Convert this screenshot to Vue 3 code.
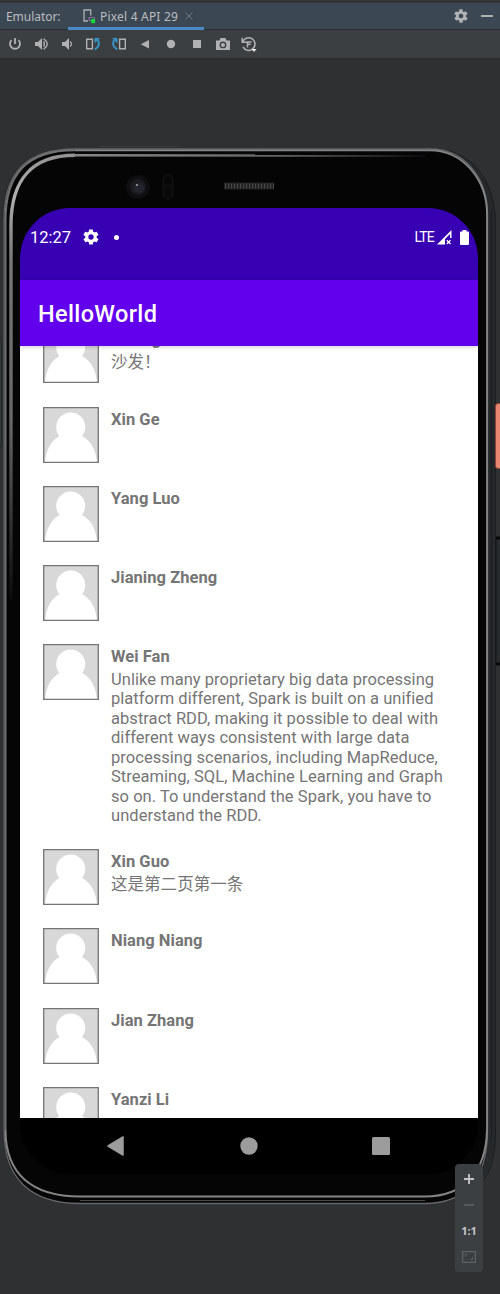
<script setup>
const people = [
  { name: 'Li Jing', lines: ['沙发！'] },
  { name: 'Xin Ge', lines: [] },
  { name: 'Yang Luo', lines: [] },
  { name: 'Jianing Zheng', lines: [] },
  {
    name: 'Wei Fan',
    lines: [
      'Unlike many proprietary big data processing',
      'platform different, Spark is built on a unified',
      'abstract RDD, making it possible to deal with',
      'different ways consistent with large data',
      'processing scenarios, including MapReduce,',
      'Streaming, SQL, Machine Learning and Graph',
      'so on. To understand the Spark, you have to',
      'understand the RDD.',
    ],
  },
  { name: 'Xin Guo', lines: ['这是第二页第一条'] },
  { name: 'Niang Niang', lines: [] },
  { name: 'Jian Zhang', lines: [] },
  { name: 'Yanzi Li', lines: [] },
]
const gear =
  'M19.4 13a7.5 7.5 0 0 0 0-2l2.1-1.6a.5.5 0 0 0 .1-.6l-2-3.5a.5.5 0 0 0-.6-.2l-2.5 1a7.3 7.3 0 0 0-1.7-1l-.4-2.65a.5.5 0 0 0-.5-.45h-4a.5.5 0 0 0-.5.45L9 5.1a7.7 7.7 0 0 0-1.7 1l-2.5-1a.5.5 0 0 0-.6.2l-2 3.5a.5.5 0 0 0 .1.6L4.5 11a8 8 0 0 0 0 2l-2.1 1.6a.5.5 0 0 0-.1.6l2 3.5c.1.2.4.3.6.2l2.5-1a7.3 7.3 0 0 0 1.7 1l.4 2.65c0 .25.25.45.5.45h4c.25 0 .46-.2.5-.45l.4-2.65a7.7 7.7 0 0 0 1.7-1l2.5 1c.2.1.5 0 .6-.2l2-3.5a.5.5 0 0 0-.1-.6zM12 15.5a3.5 3.5 0 1 1 0-7 3.5 3.5 0 0 1 0 7z'
</script>

<template>
  <div class="window">
    <header class="tabs">
      <span class="label">Emulator:</span>
      <div class="tab">
        <svg width="14" height="16" viewBox="0 0 14 16" fill="none">
          <path d="M8.700 7.500V2H2v11h4" stroke="#afb1b3" stroke-width="1.300" />
          <path d="M7 9.500h5.500v3H7z" stroke="#8d6fa3" />
          <rect x="9" y="11" width="4.200" height="4.200" rx="1" fill="#0fd43c" />
        </svg>
        <span class="tab-name">Pixel 4 API 29</span>
        <svg width="8" height="8" viewBox="0 0 8 8"><path d="M.5.5l7 7m0-7l-7 7" stroke="#6c7883" /></svg>
      </div>
      <div class="window-actions">
        <svg width="14" height="14" viewBox="1.500 1.500 21 21"><path :d="gear" fill="#afb1b3" /></svg>
        <svg width="12" height="14" viewBox="0 0 12 14"><path d="M0 7h12" stroke="#afb1b3" stroke-width="2" /></svg>
      </div>
    </header>

    <nav class="toolbar">
      <svg viewBox="0 0 16 16" fill="none" stroke="#afb1b3" stroke-width="1.800"><path d="M8 2v6M4.500 4.200a5 5 0 1 0 7 0" /></svg>
      <svg viewBox="0 0 16 16" fill="none" stroke="#afb1b3"><path d="M2 6h3l4-4v12L5 10H2z" fill="#afb1b3" stroke="none" /><path d="M10.500 5.500q2 2.500 0 5M10.500 2.800q7.500 5.200 0 10.400" stroke-width="1.300" /></svg>
      <svg viewBox="0 0 16 16" fill="none" stroke="#afb1b3"><path d="M3 6h3l4-4v12L6 10H3z" fill="#afb1b3" stroke="none" /><path d="M11 5.500q3 2.500 0 5" stroke-width="1.300" /></svg>
      <svg viewBox="0 0 16 16" fill="none"><path d="M1.700 3.300h5.700v9.400H1.700z" stroke="#afb1b3" stroke-width="1.400" /><path d="M9.700 13.400q6-3.400 3.200-9.500" stroke="#3592c4" stroke-width="2" /><path d="M9.500 2H15l-5.500 5.500z" fill="#3592c4" /></svg>
      <svg viewBox="0 0 16 16" fill="none"><path d="M8.600 3.300h5.700v9.400H8.600z" stroke="#afb1b3" stroke-width="1.400" /><path d="M6.300 13.400q-6-3.400-3.200-9.500" stroke="#3592c4" stroke-width="2" /><path d="M6.500 2H1l5.500 5.500z" fill="#3592c4" /></svg>
      <svg viewBox="0 0 16 16"><path d="M12 4v8.500L3.700 8.200z" fill="#afb1b3" /></svg>
      <svg viewBox="0 0 16 16"><circle cx="8" cy="8" r="4.200" fill="#afb1b3" /></svg>
      <svg viewBox="0 0 16 16"><path d="M4 4h8v8H4z" fill="#afb1b3" /></svg>
      <svg viewBox="0 0 16 16"><path fill-rule="evenodd" d="M1 4.500h3.500l1-2.500h5l1 2.500H15V14H1zM8 5.500a3.400 3.400 0 1 0 0 6.800 3.400 3.400 0 0 0 0-6.800z" fill="#afb1b3" /><circle cx="8" cy="8.900" r="2" fill="#afb1b3" /></svg>
      <svg class="history" viewBox="0 0 16 16" fill="none"><path d="M1.200 1.800v4.400h4.600M1.800 5.800a6.300 6.300 0 1 1 .2 5M6.500 8.300h3.200M6.500 11.500V6h4" stroke="#afb1b3" stroke-width="1.500" /><path d="M10.500 13h5L13 16z" fill="#eee" /></svg>
    </nav>

    <main class="stage">
      <svg class="device" width="500" height="1235" viewBox="0 59 500 1235" fill="none">
        <defs>
          <linearGradient id="rimFade" gradientUnits="userSpaceOnUse" x1="0" y1="150" x2="0" y2="600">
            <stop offset="0" stop-color="#8f8f8f" /><stop offset=".1" stop-color="#b0b0b0" /><stop offset=".25" stop-color="#777" /><stop offset=".6" stop-color="#686868" /><stop offset="1" stop-color="#0a0a0b" />
          </linearGradient>
          <linearGradient id="topFade" gradientUnits="userSpaceOnUse" x1="60" y1="0" x2="425" y2="0">
            <stop offset="0" stop-color="#8b8b8b" /><stop offset=".6" stop-color="#626262" /><stop offset="1" stop-color="#0a0a0c" />
          </linearGradient>
        </defs>
        <path d="M100 146.500h78" stroke="#3b3c3e" />
        <rect x="-3" y="340" width="4" height="107" rx="2" fill="#555857" stroke="#17181a" />
        <path d="M430 149C470 149 496 180 496 226V1128C496 1180 470 1204 420 1204H80C28 1204 2.500 1178 2.500 1128V220C3 172 26 148 75 148z" fill="#26292b" />
        <path d="M445 150C478 157 495.500 186 495.500 226V1128C495.500 1160 490 1176 476 1188M491.500 210V1140" stroke="#1b1d1f" />
        <rect x="495.500" y="403.500" width="8" height="65" rx="2.500" fill="#ea8572" stroke="#8c4438" />
        <rect x="496" y="538" width="8" height="126" rx="1" fill="#282b2d" stroke="#141618" />
        <path d="M496 538h4M496 664h4" stroke="#070808" stroke-width="3" />
        <path d="M75 149H430C466 149 487.500 180 487.500 214V1130C487.500 1178 466 1203.500 425 1203.500H80C30 1203.500 4 1178 4 1130V220C4 174 25 149 75 149z" fill="#050506" stroke="#66676a" stroke-width="1.300" />
        <path d="M75 150.300H430C464 150.300 486.800 181 487 214V1130" stroke="#858688" stroke-width="1.800" />
        <path d="M5.500 1130V220C5.500 175 26 150.300 75 150.300" stroke="#6f7173" stroke-width="2" />
        <path d="M5.500 1130C5.500 1174 32 1196.500 80 1196.500H425C464 1196.500 486 1172 487 1130" stroke="#858585" stroke-width="2" />
        <path d="M80 1200.500H425" stroke="#4b4b4c" />
        <path d="M11 600V225C11 180 32 155.300 75 155.300" stroke="url(#rimFade)" stroke-width="3.400" />
        <path d="M74 155.300L425 155.600" stroke="url(#topFade)" stroke-width="2.600" />
        <circle cx="138" cy="187" r="12" fill="#0e0e11" />
        <circle cx="138" cy="187" r="8" fill="#1a1a20" />
        <circle cx="139" cy="188" r="5" fill="#24242e" />
        <circle cx="137" cy="185" r="1" fill="#aaa" />
        <rect x="163" y="174" width="10" height="25" rx="5" fill="#0b0b0d" stroke="#121215" />
        <circle cx="168" cy="181" r="3" fill="#070709" /><circle cx="168" cy="192" r="3" fill="#070709" />
        <path d="M224 186h50" stroke="#202020" stroke-width="7" />
        <path d="M225 186h49" stroke="#484848" stroke-width="5" stroke-dasharray="1.200 1.800" />
      </svg>

      <section class="screen">
        <div class="status">
          <span class="clock">12:27</span>
          <svg class="status-gear" width="16" height="16" viewBox="1.500 1.500 21 21"><path :d="gear" fill="#fff" /></svg>
          <i class="dot"></i>
          <span class="lte">LTE</span>
          <svg class="signal" width="15" height="15" viewBox="0 0 15 15"><path d="M0 14.500L14.500 0v8h-1.500V4L8 9v5.500z" fill="#fff" /><path d="M9.800 10.300l3.700 3.700m0-3.700l-3.700 3.700" stroke="#fff" stroke-width="1.300" /></svg>
          <svg class="battery" width="9" height="15" viewBox="0 0 9 15"><path d="M2.500 0h4v1.500H8q1 0 1 1V14q0 1-1 1H1q-1 0-1-1V2.500q0-1 1-1h1.500z" fill="#fff" /></svg>
        </div>
        <div class="appbar">HelloWorld</div>
        <div class="list">
          <article v-for="p in people" :key="p.name" class="row">
            <svg class="avatar" width="56" height="56" viewBox="0 0 56 56">
              <path d="M0 0h56v56H0z" fill="#d8d8d8" />
              <circle cx="27.700" cy="20" r="14.500" fill="#fff" />
              <path d="M2 55.500C3 42 9 33 16.500 29Q28 22 39 29C47 33 53 42 54 55.500z" fill="#fff" />
              <path d="M.7.700h54.600v54.600H.7z" fill="none" stroke="#757575" stroke-width="1.300" />
            </svg>
            <div class="content">
              <div class="name">{{ p.name }}</div>
              <div v-for="line in p.lines" :key="line" class="line">{{ line }}</div>
            </div>
          </article>
        </div>
        <div class="navbar">
          <svg width="18" height="20" viewBox="0 0 18 20"><path d="M16 1v18L1 10z" fill="#9c9c9c" stroke="#9c9c9c" stroke-width="1.500" stroke-linejoin="round" /></svg>
          <svg width="18" height="18" viewBox="0 0 18 18"><circle cx="9" cy="9" r="8.700" fill="#9c9c9c" /></svg>
          <svg width="18" height="18" viewBox="0 0 18 18"><rect width="18" height="18" rx="1.500" fill="#9c9c9c" /></svg>
        </div>
      </section>

      <aside class="zoom">
        <svg width="14" height="14" viewBox="0 0 14 14"><path d="M7 2v10M2 7h10" stroke="#bfc1c3" stroke-width="1.900" /></svg>
        <svg width="14" height="14" viewBox="0 0 14 14"><path d="M2 7h10" stroke="#5f6264" stroke-width="1.600" /></svg>
        <span>1:1</span>
        <svg width="14" height="14" viewBox="0 0 14 14" fill="none" stroke="#5f6264"><path d="M.6 1.600h12.800v10.800H.6z" stroke-width="1.200" /><path d="M3.500 6.500v-2h2M10.500 7.500v2h-2" /></svg>
      </aside>
    </main>
  </div>
</template>

<style>
body {
  background: #2e3032;
}
</style>

<style scoped>
.window {
  width: 500px;
  height: 1294px;
  overflow: hidden;
  display: flex;
  flex-direction: column;
  font-family: Roboto, "Noto Sans CJK SC", sans-serif;
}
svg {
  display: block;
  flex: none;
}
.tabs {
  box-sizing: border-box;
  height: 30px;
  border-top: 3px solid #323436;
  border-bottom: 1px solid #2c2f31;
  background: #3c4754;
  display: flex;
  align-items: center;
  color: #bbbdbf;
  font: 12px "Noto Sans", sans-serif;
}
.label {
  width: 62px;
  padding-left: 6px;
  letter-spacing: -0.05px;
}
.tab {
  box-sizing: border-box;
  width: 136px;
  height: 27px;
  border-bottom: 3px solid #4a88c7;
  margin-bottom: -1px;
  padding: 2px 0 0 14px;
  display: flex;
  align-items: center;
}
.tab-name {
  width: 82px;
  margin: 0 3px 0 4px;
  letter-spacing: 0.2px;
  white-space: nowrap;
}
.window-actions {
  margin-left: auto;
  padding-right: 7px;
  display: flex;
  gap: 13px;
}
.toolbar {
  box-sizing: border-box;
  height: 29px;
  padding-left: 7px;
  border-bottom: 1px solid #2b2d2f;
  background: #3c3f41;
  display: flex;
  align-items: center;
  gap: 10px;
}
.toolbar svg {
  width: 16px;
  height: 16px;
}
.stage {
  position: relative;
  flex: 1;
  background: #2e3032;
}
.device {
  position: absolute;
  top: 0;
  left: 0;
}
.screen {
  position: relative;
  width: 458px;
  height: 966px;
  margin: 149px 0 0 20px;
  border-radius: 50px;
  overflow: hidden;
  display: flex;
  flex-direction: column;
}
.status {
  box-sizing: border-box;
  height: 72px;
  padding: 0 9px 14px 10px;
  background: #3700b3;
  color: #fff;
  display: flex;
  align-items: center;
}
.clock {
  width: 53px;
  font-size: 16.5px;
}
.dot {
  width: 5px;
  height: 5px;
  margin-left: 15px;
  border-radius: 50%;
  background: #fff;
}
.lte {
  margin-left: auto;
  font-size: 14px;
  letter-spacing: -0.8px;
}
.signal {
  margin: 0 8px 0 3px;
}
.appbar {
  position: relative;
  z-index: 1;
  height: 66px;
  line-height: 69px;
  padding-left: 18px;
  background: #6200ee;
  color: #fff;
  font-size: 23.5px;
  letter-spacing: 0.35px;
  font-weight: 500;
  box-shadow: 0 1px 4px rgba(0, 0, 0, 0.2);
}
.list {
  height: 772px;
  overflow: hidden;
  background: #fff;
  display: flex;
  flex-direction: column;
  color: #757575;
}
.row {
  flex: none;
  display: flex;
  gap: 12px;
  min-height: 56px;
  padding: 0 0 23.25px 23px;
}
.row:first-child {
  margin-top: -18.7px;
}
.name {
  height: 25.6px;
  line-height: 25px;
  font-size: 16.5px;
  font-weight: 700;
  letter-spacing: 0.04px;
}
.line {
  height: 19.5px;
  line-height: 19.5px;
  font-size: 16.5px;
  letter-spacing: 0.04px;
  white-space: nowrap;
}
.navbar {
  height: 56px;
  padding: 0 88px 0 87px;
  background: #000;
  display: flex;
  align-items: center;
  justify-content: space-between;
}
.zoom {
  position: absolute;
  left: 455px;
  top: 1105px;
  box-sizing: border-box;
  width: 28px;
  height: 108px;
  padding: 8px 0;
  border-radius: 4px;
  background: #3c3f41;
  display: flex;
  flex-direction: column;
  align-items: center;
  justify-content: space-between;
}
.zoom span {
  color: #c5c7c9;
  font: 700 11px/14px "Open Sans", sans-serif;
}
</style>
